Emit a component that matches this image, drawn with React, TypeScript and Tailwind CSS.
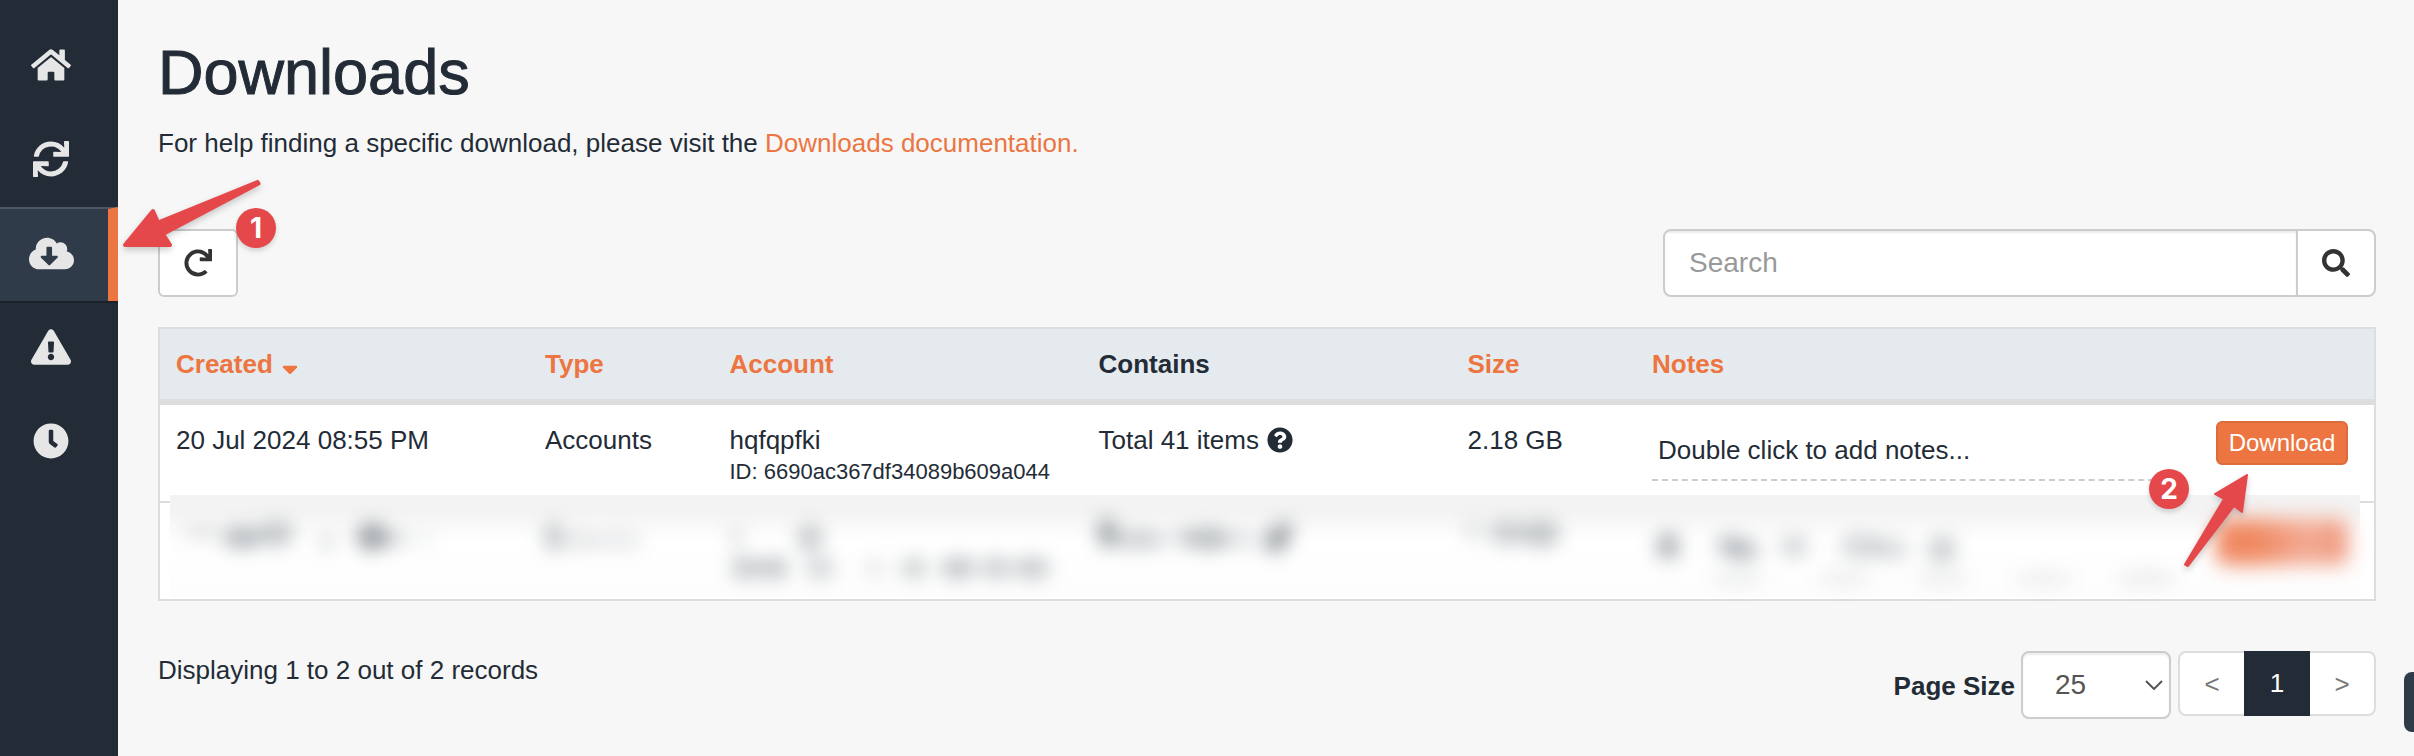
import React from 'react';
import {
  FaClock,
  FaCloudDownloadAlt,
  FaExclamationTriangle,
  FaHome,
  FaQuestionCircle,
  FaRedo,
  FaSearch,
  FaSortDown,
  FaSync,
} from 'react-icons/fa';

// cx, cy, rx, ry, opacity
type Blob = [number, number, number, number, number];

const navItems = [
  { label: 'Home', icon: FaHome, size: 'text-[40px]', active: false },
  { label: 'Sync', icon: FaSync, size: 'text-[36px]', active: false },
  { label: 'Downloads', icon: FaCloudDownloadAlt, size: 'text-[45px]', active: true },
  { label: 'Alerts', icon: FaExclamationTriangle, size: 'text-[40px]', active: false },
  { label: 'History', icon: FaClock, size: 'text-[36px]', active: false },
];

const columns = [
  { title: 'Created', width: 'w-2/12', sortable: true, sorted: true },
  { title: 'Type', width: 'w-1/12', sortable: true, sorted: false },
  { title: 'Account', width: 'w-2/12', sortable: true, sorted: false },
  { title: 'Contains', width: 'w-2/12', sortable: false, sorted: false },
  { title: 'Size', width: 'w-1/12', sortable: true, sorted: false },
  { title: 'Notes', width: 'w-3/12', sortable: true, sorted: false },
];

// Obscured values of the hidden row, one list per column
const hiddenCells: Blob[][] = [
  [
    [26, 30, 18, 6, 0.12],
    [66, 35, 17, 9, 0.34],
    [100, 31, 16, 10, 0.28],
    [151, 39, 8, 7, 0.16],
    [196, 34, 14, 11, 0.46],
    [218, 36, 14, 7, 0.16],
    [250, 37, 10, 6, 0.06],
  ],
  [
    [8, 34, 8, 12, 0.28],
    [34, 38, 18, 8, 0.12],
    [74, 38, 22, 8, 0.1],
  ],
  [
    [6, 35, 7, 10, 0.12],
    [80, 35, 12, 11, 0.26],
    [16, 65, 14, 9, 0.26],
    [44, 65, 13, 9, 0.28],
    [90, 65, 13, 9, 0.2],
    [145, 65, 10, 8, 0.1],
    [184, 65, 12, 9, 0.22],
    [228, 65, 16, 9, 0.28],
    [266, 65, 14, 9, 0.24],
    [302, 65, 16, 9, 0.26],
  ],
  [
    [8, 30, 9, 12, 0.42],
    [40, 37, 24, 8, 0.24],
    [84, 35, 10, 8, 0.18],
    [110, 36, 20, 9, 0.32],
    [144, 37, 12, 7, 0.14],
    [176, 38, 11, 10, 0.4],
    [186, 28, 8, 9, 0.3],
  ],
  [
    [4, 28, 5, 10, 0.16],
    [40, 30, 18, 10, 0.24],
    [74, 31, 16, 11, 0.28],
  ],
  [
    [16, 43, 11, 11, 0.36],
    [76, 42, 12, 9, 0.24],
    [92, 47, 14, 9, 0.28],
    [142, 43, 13, 9, 0.2],
    [210, 43, 20, 10, 0.2],
    [240, 46, 16, 9, 0.16],
    [290, 46, 13, 11, 0.24],
    [86, 75, 24, 7, 0.07],
    [192, 75, 24, 7, 0.07],
    [290, 75, 24, 7, 0.07],
    [392, 75, 26, 7, 0.07],
    [494, 75, 26, 7, 0.08],
  ],
];

function Smudge({ blobs }: { blobs: Blob[] }) {
  return (
    <svg aria-hidden="true" className="relative block h-24 w-full overflow-visible blur-[9px]">
      {blobs.map(([cx, cy, rx, ry, opacity], i) => (
        <ellipse key={i} cx={cx} cy={cy} rx={rx * 1.15} ry={ry * 1.3} fill="#36434b" opacity={opacity} />
      ))}
    </svg>
  );
}

function Sidebar() {
  return (
    <nav aria-label="Main" className="w-[118px] shrink-0 bg-[#232c36] pt-[19px]">
      {navItems.map(({ label, icon: Icon, size, active }) => (
        <a
          key={label}
          href="#"
          aria-label={label}
          className={
            active
              ? 'flex h-[94px] items-center justify-center border-t-2 border-r-[10px] border-t-[#4e5863] border-r-[#ec7541] bg-[#2f3b48] pr-[6px] pb-1 text-[#e6e6e6] shadow-[0_2px_0_#1a2129]'
              : 'flex h-[94px] items-center justify-center pr-4 pb-[2px] text-[#e6e6e6]'
          }
        >
          <Icon className={size} />
        </a>
      ))}
    </nav>
  );
}

function DownloadsTable() {
  return (
    <table className="mt-[30px] w-full table-fixed border-separate border-spacing-0 border-2 border-[#ddd] bg-white text-left">
      <thead>
        <tr className="h-[76px] bg-[#e5eaee] leading-[38px]">
          {columns.map((col) => (
            <th key={col.title} className={`${col.width} border-b-[6px] border-[#ddd] px-4 py-0 font-bold`}>
              {col.sortable ? (
                <a href="#" className="inline-flex items-center gap-1 text-[#ec7541]">
                  {col.title}
                  {col.sorted && <FaSortDown />}
                </a>
              ) : (
                col.title
              )}
            </th>
          ))}
          <th aria-label="Actions" className="w-1/12 border-b-[6px] border-[#ddd]"></th>
        </tr>
      </thead>
      <tbody>
        <tr className="h-[98px] align-top leading-[38px] [&>td]:border-b-2 [&>td]:border-[#ddd] [&>td]:px-4 [&>td]:pt-4">
          <td>20 Jul 2024 08:55 PM</td>
          <td>Accounts</td>
          <td className="whitespace-nowrap">
            hqfqpfki
            <div className="text-[22px] leading-[26px]">ID: 6690ac367df34089b609a044</div>
          </td>
          <td>
            <span className="flex items-center gap-2">
              Total 41 items <FaQuestionCircle />
            </span>
          </td>
          <td>2.18 GB</td>
          <td>
            <div className="border-b-2 border-dashed border-[#ccc] px-[6px] pt-[10px] pb-[10px]">
              Double click to add notes...
            </div>
          </td>
          <td className="relative">
            <div className="flex justify-end pr-[10px]">
              <button
                type="button"
                className="h-[44px] w-[132px] rounded-[6px] border-2 border-[#dc6c3b] bg-[#ec7541] text-2xl leading-[40px] text-white"
              >
                Download
              </button>
            </div>
            <Marker number={2} className="absolute top-16 right-[185px] z-20" />
            <svg
              aria-hidden="true"
              viewBox="0 0 70 100"
              className="absolute top-[65px] right-[123px] z-20 h-[100px] w-[70px] drop-shadow-[0_3px_3px_rgba(0,0,0,0.2)]"
            >
              <path
                d="M66 5 L34 24 L43 29 L4 94.500 L7 96 L53 36 L61 42 Z"
                fill="#e5484b"
                stroke="#e5484b"
                strokeWidth="2"
                strokeLinejoin="round"
              />
            </svg>
          </td>
        </tr>
        <tr className="relative h-24 align-top">
          {hiddenCells.map((blobs, i) => (
            <td key={i} className="px-4">
              {i === 0 && (
                <div className="absolute -top-2 right-[14px] left-[10px] h-[102px] bg-linear-to-b from-[#f3f3f3] from-15% via-white via-45% to-[#fdfdfd]"></div>
              )}
              <Smudge blobs={blobs} />
            </td>
          ))}
          <td className="px-4">
            <div
              aria-hidden="true"
              className="relative mt-4 mr-[10px] ml-auto h-[46px] w-[132px] rounded-[10px] bg-linear-to-r from-[#ee7c50] from-30% via-[#f2a38a] via-70% to-[#ee8a6c] opacity-90 blur-[10px]"
            ></div>
          </td>
        </tr>
      </tbody>
    </table>
  );
}

function Marker({ number, className }: { number: number; className: string }) {
  return (
    <span
      className={`${className} flex size-10 items-center justify-center rounded-full bg-[#e5484b] font-[Inter,sans-serif] text-[28px] leading-none font-bold text-white shadow-[0_3px_5px_rgba(0,0,0,0.15)]`}
    >
      {number}
    </span>
  );
}

export default function App() {
  return (
    <div className="flex min-h-screen bg-[#f7f7f7] font-['Liberation_Sans',Arial,sans-serif] text-[26px] text-[#232c36]">
      <Sidebar />

      <main className="min-w-0 flex-1 pt-9 pr-[38px] pl-10">
        <h1 className="text-[63px] leading-[72px] [-webkit-text-stroke:1px_#232c36]">Downloads</h1>
        <p className="mt-4 leading-[38px]">
          For help finding a specific download, please visit the{' '}
          <a href="#" className="text-[#ec7541]">
            Downloads documentation.
          </a>
        </p>

        {/* Toolbar */}
        <div className="relative mt-[67px] flex justify-between">
          <button
            type="button"
            aria-label="Refresh"
            className="flex h-[68px] w-20 items-center justify-center rounded-[6px] border-2 border-[#ccc] bg-white text-[28px] text-[#333]"
          >
            <FaRedo />
          </button>

          <form className="flex h-[68px] w-[713px] overflow-hidden rounded-[8px] border-2 border-[#ccc] bg-white">
            <input
              type="search"
              aria-label="Search"
              placeholder="Search"
              className="min-w-0 flex-1 px-6 text-[28px] shadow-[inset_0_2px_2px_rgba(0,0,0,0.075)] outline-none placeholder:text-[#999]"
            />
            <button
              type="button"
              aria-label="Run search"
              className="flex w-[78px] items-center justify-center border-l-2 border-[#ccc] text-[28px] text-[#333]"
            >
              <FaSearch />
            </button>
          </form>

          <svg
            aria-hidden="true"
            viewBox="0 0 150 80"
            className="absolute -top-[53px] -left-[38px] h-20 w-[150px] drop-shadow-[0_3px_3px_rgba(0,0,0,0.2)]"
          >
            <path
              d="M5 69 L33 35 L38 46.500 L137.500 6 L138.500 7.500 L43 58 L50 69 Z"
              fill="#e5484b"
              stroke="#e5484b"
              strokeWidth="4"
              strokeLinejoin="round"
            />
          </svg>
          <Marker number={1} className="absolute -top-[21px] left-[78px]" />
        </div>

        <DownloadsTable />

        {/* Footer */}
        <div className="mt-[50px] flex items-start justify-between">
          <p className="leading-[38px]">Displaying 1 to 2 out of 2 records</p>

          <div className="flex items-start">
            <label htmlFor="page-size" className="mr-[6px] leading-[70px] font-bold">
              Page Size
            </label>
            <div className="relative mr-[7px]">
              <select
                id="page-size"
                defaultValue="25"
                className="h-[68px] w-[150px] appearance-none rounded-[8px] border-2 border-[#ccc] bg-white px-8 text-[28px] text-[#555] shadow-[inset_0_2px_2px_rgba(0,0,0,0.075)]"
              >
                <option>10</option>
                <option>25</option>
                <option>50</option>
              </select>
              <svg
                aria-hidden="true"
                viewBox="0 0 18 10"
                className="pointer-events-none absolute top-[29px] right-2 h-[10px] w-[18px]"
              >
                <path d="M1 1 L9 9 L17 1" fill="none" stroke="#555" strokeWidth="2" />
              </svg>
            </div>

            <div className="flex h-[65px] text-[26px] text-[#777]">
              <button type="button" aria-label="Previous page" className="w-[66px] rounded-l-[8px] border-2 border-r-0 border-[#ddd] bg-white pt-[2px]">
                &lt;
              </button>
              <button type="button" aria-current="page" className="w-[66px] bg-[#232c36] text-white">
                1
              </button>
              <button type="button" aria-label="Next page" className="w-[66px] rounded-r-[8px] border-2 border-l-0 border-[#ddd] bg-white pt-[2px]">
                &gt;
              </button>
            </div>
          </div>
        </div>
      </main>

      {/* Help tab on the window edge */}
      <button
        type="button"
        aria-label="Help"
        className="fixed right-0 bottom-6 h-[60px] w-[10px] rounded-l-[8px] bg-[#2f3b48]"
      ></button>
    </div>
  );
}
